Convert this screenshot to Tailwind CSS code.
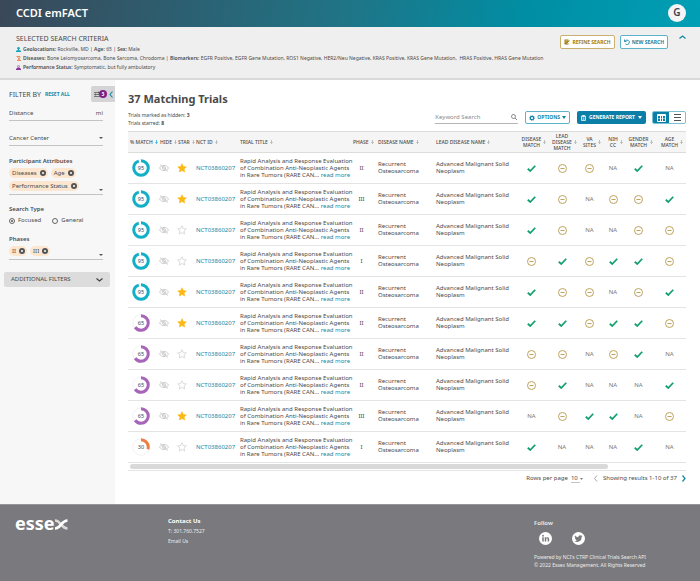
<!DOCTYPE html>
<html lang="en">
<head>
    <meta charset="UTF-8">
    <meta name="viewport" content="width=device-width, initial-scale=1.0">
    <title>CCDI emFACT</title>
    <script src="https://cdn.jsdelivr.net/npm/@tailwindcss/browser@4"></script>
</head>
<body class="min-h-screen flex flex-col bg-white font-['Noto_Sans',sans-serif] text-[6px] leading-[7px] text-[#4a4a4a]">

    <!-- Top bar -->
    <header class="h-[27px] shrink-0 flex items-center justify-between pl-4 pr-[14px] pb-[2px] bg-[linear-gradient(100deg,#3a4859,#1f7587_50%,#008ea4_75%,#009fb5)]">
        <h1 class="text-[11px] leading-none font-semibold text-white">CCDI emFACT</h1>
        <button class="size-[18px] rounded-full bg-[#f4f4f6] text-[10px] font-semibold text-[#3b3f52]">G</button>
    </header>

    <!-- Search criteria -->
    <section class="flex justify-between bg-[#efefef] border-b-2 border-[#d9d9d9] pl-4 pr-[14px] pt-2 pb-[6px]">
        <div>
            <h2 class="text-[7px] leading-[7px] mb-[3px]">SELECTED SEARCH CRITERIA</h2>
            <ul class="text-[5px] leading-[9px]">
                <li class="flex items-center gap-[2px]">
                    <svg class="size-[5px]" viewBox="0 0 10 10" fill="#14a5b8"><circle cx="5" cy="2.5" r="2.5"/><path d="M4 4h2v2l4 1.500V10H0V7.500L4 6z"/></svg>
                    <span><b class="font-semibold">Geolocations:</b> Rockville, MD | <b class="font-semibold">Age:</b> 65 | <b class="font-semibold">Sex:</b> Male</span>
                </li>
                <li class="flex items-center gap-[2px]">
                    <svg class="size-[5px]" viewBox="0 0 10 10" fill="none" stroke="#ee8352" stroke-width="1.800"><path d="M1 1h7M2 9h8M3 1c0 4 5 4 5 8M8 1c0 4-4 4-4 8M4 5h3"/></svg>
                    <span><b class="font-semibold">Diseases:</b> Bone Leiomyosarcoma, Bone Sarcoma, Chrodoma | <b class="font-semibold">Biomarkers:</b> EGFR Positive, EGFR Gene Mutation, ROS1 Negative, HER2/Neu Negative, KRAS Positive, KRAS Gene Mutation,&nbsp; HRAS Positive, HRAS Gene Mutation</span>
                </li>
                <li class="flex items-center gap-[2px]">
                    <svg class="size-[5px]" viewBox="0 0 10 10" fill="#8e35a0"><circle cx="5" cy="2.500" r="2" fill="none" stroke="#8e35a0"/><path d="M3 5h4l3 3v2H0V8z"/></svg>
                    <span><b class="font-semibold">Performance Status:</b> Symptomatic, but fully ambulatory</span>
                </li>
            </ul>
        </div>
        <div class="flex items-start gap-[5px] text-[5px] font-bold">
            <button class="h-[14px] flex items-center gap-[2px] px-[3px] rounded-[2px] border border-[#c9b06e] bg-white text-[#a07d14]">
                <svg class="size-[6px]" viewBox="0 0 12 12"><path d="M1 1h8v3l-3 3v2h2l1-1v3H1z" fill="#a07d14"/><path d="M3 3.500h4M3 6h2" stroke="#fff"/><path d="M6 8l5-5" stroke="#a07d14" stroke-width="2"/></svg>
                REFINE SEARCH
            </button>
            <button class="h-[14px] flex items-center gap-[2px] px-[3px] rounded-[2px] border border-[#5db3c9] bg-white text-[#1687a7]">
                <svg class="size-[6px]" viewBox="0 0 12 12" fill="none" stroke="#1687a7" stroke-width="1.800"><path d="M1 1v4h4M2 5a4.500 4.500 0 1 1 1 4.800"/></svg>
                NEW SEARCH
            </button>
            <button class="ml-[6px]" aria-label="Collapse">
                <svg class="w-[7px] h-[4px]" viewBox="0 0 14 8" fill="none" stroke="#1687a7" stroke-width="2.500"><path d="M1 7l6-5 6 5"/></svg>
            </button>
        </div>
    </section>

    <div class="flex grow">
        <!-- Filters -->
        <aside class="w-[115px] shrink-0 bg-[#f7f7f7] pt-[6px]">
            <div class="flex items-center h-[16px] pl-[9px]">
                <h2 class="text-[7px]">FILTER BY</h2>
                <button class="ml-[4px] text-[5px] font-bold text-[#1687a7]">RESET ALL</button>
                <button class="ml-auto w-[24px] h-[16px] rounded-l-[2px] bg-[#d4d4d6] flex items-center pl-[3px]" aria-label="Hide filters">
                    <svg class="w-[6px] h-[7px]" viewBox="0 0 12 14" stroke="#555" stroke-width="1.500"><path d="M0 3h12M0 7h12M0 11h12M9 1v4M3 5v4"/></svg>
                    <span class="-ml-px size-[8px] rounded-full bg-[#7b1f86] text-white text-[5px] leading-[8px] font-bold">3</span>
                    <svg class="ml-[2px] w-[4px] h-[7px]" viewBox="0 0 8 14" fill="none" stroke="#1687a7" stroke-width="2.200"><path d="M7 1L2 7l5 6"/></svg>
                </button>
            </div>
            <form class="pl-[9px] pr-[12px]">
                <label class="mt-[5px] h-[14px] flex items-start pt-[3px] justify-between border-b border-[#c4c4c4]">
                    <input class="w-16 placeholder:text-[#4a4a4a] placeholder:opacity-100 outline-none" placeholder="Distance" aria-label="Distance">
                    <span>mi</span>
                </label>
                <div class="mt-[10px] h-[15px] flex items-center border-b border-[#c4c4c4]">
                    <select class="grow appearance-none outline-none" aria-label="Cancer Center"><option>Cancer Center</option></select>
                    <svg class="w-[4px] h-[2px]" viewBox="0 0 8 4" fill="#555"><path d="M0 0h8L4 4z"/></svg>
                </div>

                <h3 class="mt-[12px] font-semibold">Participant Attributes</h3>
                <div class="mt-[3px] flex items-end justify-between border-b border-[#c4c4c4] pb-[3px]">
                    <div class="flex flex-wrap gap-x-[3px] gap-y-[3px]" data-chips="Diseases,Age,Performance Status"></div>
                    <svg class="w-[4px] h-[2px] shrink-0" viewBox="0 0 8 4" fill="#555"><path d="M0 0h8L4 4z"/></svg>
                </div>

                <fieldset class="mt-[11px]">
                    <legend class="font-semibold">Search Type</legend>
                    <div class="mt-[4px] flex gap-[11px]">
                        <label class="flex items-center gap-[3px]"><input type="radio" name="type" checked class="appearance-none size-[6px] rounded-full border border-[#666] p-px checked:bg-[#555] bg-clip-content">Focused</label>
                        <label class="flex items-center gap-[3px]"><input type="radio" name="type" class="appearance-none size-[6px] rounded-full border border-[#666]">General</label>
                    </div>
                </fieldset>

                <h3 class="mt-[12px] font-semibold">Phases</h3>
                <div class="mt-[3px] flex items-end justify-between border-b border-[#c4c4c4] pb-[3px]">
                    <div class="flex gap-x-[3px]" data-chips="II,III"></div>
                    <svg class="w-[4px] h-[2px] shrink-0" viewBox="0 0 8 4" fill="#555"><path d="M0 0h8L4 4z"/></svg>
                </div>
            </form>
            <button class="mt-[12px] ml-[4px] w-[106px] h-[15px] flex items-center justify-between px-[7px] rounded-[2px] bg-[#dcdcdc]">
                ADDITIONAL FILTERS
                <svg class="w-[7px] h-[4px]" viewBox="0 0 14 8" fill="none" stroke="#444" stroke-width="2.500"><path d="M1 1l6 5 6-5"/></svg>
            </button>
        </aside>

        <!-- Results -->
        <main class="grow min-w-0 pl-[13px] pr-[14px] pt-[12px]">
            <h2 class="text-[11px] leading-[14px] font-bold">37 Matching Trials</h2>
            <div class="flex items-start justify-between mt-[5px] h-[20px]">
                <div class="text-[5px] leading-[8px]">
                    <p>Trials marked as hidden: <b>3</b></p>
                    <p>Trials starred: <b>8</b></p>
                </div>
                <div class="flex items-center text-[5px] font-bold">
                    <label class="w-[83px] h-[12px] flex items-center justify-between border-b border-[#b5b5b5] mr-[7px] pr-px">
                        <input class="w-16 text-[6px] font-normal outline-none placeholder:text-[#8a8a8a]" placeholder="Keyword Search" aria-label="Keyword Search">
                        <svg class="size-[6px]" viewBox="0 0 12 12" fill="none" stroke="#666" stroke-width="1.500"><circle cx="5" cy="5" r="4"/><path d="M8 8l4 4"/></svg>
                    </label>
                    <button class="h-[13px] flex items-center gap-[2px] px-[3px] rounded-[2px] border border-[#5db3c9] text-[#1687a7]">
                        <svg class="size-[6px]" viewBox="0 0 12 12" fill="none" stroke="#0d7fa5"><circle cx="6" cy="6" r="3.500" stroke-width="2.500"/><circle cx="6" cy="6" r="5.300" stroke-dasharray="2 2.160"/></svg>
                        OPTIONS
                        <svg class="w-[4px] h-[3px]" viewBox="0 0 8 6" fill="#0d7fa5"><path d="M0 0h8L4 6z"/></svg>
                    </button>
                    <button class="ml-[7px] h-[13px] flex items-center gap-[3px] px-[4px] rounded-[2px] bg-[#0b7fa8] text-white">
                        <svg class="w-[5px] h-[6px]" viewBox="0 0 10 12" fill="none" stroke="#fff" stroke-width="1.500"><path d="M1 2h8v9H1z"/><path d="M3 1h4v2H3zM3 6h4M3 8.500h4"/></svg>
                        GENERATE REPORT
                        <svg class="w-[4px] h-[3px]" viewBox="0 0 8 6" fill="#fff"><path d="M0 0h8L4 6z"/></svg>
                    </button>
                    <div class="ml-[6px] h-[13px] w-[34px] flex rounded-[2px] border border-[#7cc0d2] overflow-hidden">
                        <button class="w-1/2 bg-[#0b7fa8] flex items-center justify-center" aria-label="Table view">
                            <svg class="w-[9px] h-[8px]" viewBox="0 0 9 8" fill="none" stroke="#fff"><path d="M.5.5h8v7h-8zM0 1.500h9M3.500 2v6M5.500 2v6"/><path d="M0 4.500h9" stroke-opacity=".5"/></svg>
                        </button>
                        <button class="w-1/2 flex items-center justify-center" aria-label="List view">
                            <svg class="w-[7px] h-[7px]" viewBox="0 0 7 7" stroke="#555"><path d="M0 .5h7M0 3.500h7M0 6.500h7"/></svg>
                        </button>
                    </div>
                </div>
            </div>

            <table class="w-full table-fixed">
                <colgroup>
                    <col class="w-[30px]"><col class="w-[18px]"><col class="w-[20px]"><col class="w-[44px]"><col>
                    <col class="w-[25px]"><col class="w-[58px]"><col class="w-[80px]">
                    <col class="w-[31px]"><col class="w-[30px]"><col class="w-[25px]"><col class="w-[22px]"><col class="w-[29px]"><col class="w-[33px]">
                </colgroup>
                <thead class="bg-[#f5f5f5] border-y border-[#dcdcdc] text-[5px] leading-[6px]">
                    <tr id="head"></tr>
                </thead>
                <tbody id="trials"></tbody>
            </table>
            <div class="border-b border-[#e4e4e4] py-px pl-[2px]">
                <div class="w-[86%] h-[5px] rounded-full bg-[#d9d9d9]"></div>
            </div>

            <div class="flex items-center justify-end mt-[3px] mb-[21px] h-[9px]">
                <label for="perPage">Rows per page</label>
                <select id="perPage" class="appearance-none ml-[3px] w-[9px] border-b border-[#c4c4c4]"><option>10</option></select>
                <svg class="w-[3px] h-[2px]" viewBox="0 0 8 4" fill="#555"><path d="M0 0h8L4 4z"/></svg>
                <button class="ml-[11px]" aria-label="Previous page"><svg class="w-[4px] h-[7px]" viewBox="0 0 8 14" fill="none" stroke="#999" stroke-width="1.800"><path d="M6 1L1 7l5 6"/></svg></button>
                <span class="ml-[5px]">Showing results 1-10 of 37</span>
                <button class="ml-[5px]" aria-label="Next page"><svg class="w-[4px] h-[7px]" viewBox="0 0 8 14" fill="none" stroke="#1687a7" stroke-width="2.500"><path d="M1 1l5 6-5 6"/></svg></button>
            </div>
        </main>
    </div>

    <!-- Footer -->
    <footer class="h-[78px] shrink-0 flex bg-[#7a797d] border-t border-[#96959a] text-[#ececec] text-[5px] pl-[15px] pr-[48px]">
        <div class="w-[153px] pt-[10px] flex items-start text-[18px] leading-[16px] font-bold text-white">
            <span>esse</span>
            <svg class="mt-[4px] w-[13px] h-[11px]" viewBox="0 0 13 11" fill="none"><path d="M0 1.500c6 0 6 8 12.500 8" stroke="#d8d8d8" stroke-width="2.500"/><path d="M0 9.500c6 0 6-8 12.500-8" stroke="#fff" stroke-width="2.500"/></svg>
        </div>
        <div class="pt-[13px]">
            <h3 class="text-[6px] font-bold text-white">Contact Us</h3>
            <p class="mt-[3px]">T: 301.760.7527</p>
            <a href="#" class="block mt-[3px]">Email Us</a>
        </div>
        <div class="ml-auto w-[118px] pt-[15px]">
            <h3 class="text-[6px] font-semibold">Follow</h3>
            <div class="flex gap-[20px] pl-[5px] mt-[5px]">
                <a href="#" aria-label="LinkedIn"><svg class="size-[13px]" viewBox="0 0 26 26"><circle cx="13" cy="13" r="13" fill="#fff"/><g fill="#7a797d"><circle cx="8" cy="7.500" r="1.800"/><path d="M6.500 10.500h3V19h-3zM11.500 10.500h2.800v1.200c2-2.500 6-1.500 6 2.300v5h-3v-4.500c0-2.500-2.800-2.300-2.800 0V19h-3z"/></g></svg></a>
                <a href="#" aria-label="Twitter"><svg class="size-[13px]" viewBox="0 0 26 26"><circle cx="13" cy="13" r="13" fill="#fff"/><path transform="translate(4.500 4.500) scale(.72)" fill="#7a797d" d="M23 5a9 9 0 0 1-2.700.7 4.600 4.600 0 0 0 2-2.600 9 9 0 0 1-2.900 1.100 4.600 4.600 0 0 0-7.900 4.200A13 13 0 0 1 2 3.600a4.600 4.600 0 0 0 1.400 6.200 4.500 4.500 0 0 1-2-.6 4.600 4.600 0 0 0 3.600 4.600 4.600 4.600 0 0 1-2 .1 4.600 4.600 0 0 0 4.300 3.200A9.300 9.300 0 0 1 .5 19a13 13 0 0 0 20.200-11.600A9 9 0 0 0 23 5z"/></svg></a>
            </div>
            <p class="mt-[8px] leading-[8px]">Powered by NCI's CTRP Clinical Trials Search API<br>© 2022 Essex Management. All Rights Reserved</p>
        </div>
    </footer>

    <script>
        const arrow = (color) => `<svg class="w-[3px] h-[4px] shrink-0" viewBox="0 0 6 8" fill="none" stroke="${color}" stroke-width="1.500"><path d="M3 0v7M.5 4.500L3 7l2.500-2.500"/></svg>`;

        const columns = ['% MATCH', 'HIDE', 'STAR', 'NCT ID', 'TRIAL TITLE', 'PHASE', 'DISEASE NAME', 'LEAD DISEASE NAME',
            'DISEASE<br>MATCH', 'LEAD<br>DISEASE<br>MATCH', 'VA<br>SITES', 'NIH<br>CC', 'GENDER<br>MATCH', 'AGE<br>MATCH'];

        // score, starred, phase, match columns (y = match, o = unknown, n = not applicable)
        const trials = [
            [95, 1, 'II', 'yoonyn'],
            [95, 1, 'III', 'yonooy'],
            [95, 0, 'II', 'yonnoo'],
            [95, 0, 'I', 'oyoyyo'],
            [95, 1, 'II', 'yoonoy'],
            [65, 1, 'II', 'yyoyyo'],
            [65, 0, 'II', 'oonoyn'],
            [65, 0, 'II', 'oynnny'],
            [65, 1, 'III', 'noyyno'],
            [30, 0, 'I', 'ynnnyn'],
        ];

        const marks = {
            y: '<svg class="w-[9px] h-[7px] mx-auto" viewBox="0 0 18 14" fill="none" stroke="#12a06c" stroke-width="3.500"><path d="M1.500 7.500l5 4.500L16.500 1.500"/></svg>',
            o: '<svg class="size-[9px] mx-auto" viewBox="0 0 18 18" fill="none" stroke="#b8974a" stroke-width="1.800"><circle cx="9" cy="9" r="8"/><path d="M5 9h8"/></svg>',
            n: '<span class="text-[#777]">NA</span>',
        };

        const star = (on) => `<svg class="size-[10px]" viewBox="0 0 20 20" fill="${on ? '#fdb913' : 'none'}" stroke="${on ? '#fdb913' : '#c4c4c4'}" stroke-width="1.200"><path d="M10 1.500l2.600 5.600 6 .7-4.500 4.100 1.200 6.100L10 15l-5.300 3 1.200-6.100L1.400 7.800l6-.7z"/></svg>`;

        const ring = (score) => {
            const color = score > 90 ? '#12b0c7' : score > 50 ? '#a864b8' : '#f07c45';
            return `<svg class="size-[18px]" viewBox="0 0 36 36">
                <circle cx="18" cy="18" r="16.500" fill="none" stroke="#e3e3e3"/>
                <circle cx="18" cy="18" r="14.500" fill="none" stroke="${color}" stroke-width="6" pathLength="100" stroke-dasharray="${score} 100" transform="rotate(-90 18 18)"/>
                <text x="18" y="22" text-anchor="middle" font-size="11" fill="#444">${score}</text>
            </svg>`;
        };

        document.getElementById('head').innerHTML = columns.map((name, i) => {
            const place = i < 3 ? 'pl-[2px]' : i < 8 ? '' : 'justify-center pl-[5px]';
            return `<th class="h-[21px] p-0 font-medium"><button class="w-full flex items-center gap-[2px] whitespace-nowrap ${place}"><span>${name}</span>${arrow(i ? '#aaa' : '#12b0c7')}</button></th>`;
        }).join('');

        document.getElementById('trials').innerHTML = trials.map(([score, starred, phase, match]) => `
            <tr class="h-[31px] border-b border-[#e4e4e4]">
                <td class="pl-[4px]">${ring(score)}</td>
                <td class="pl-[1px]"><button class="block" aria-label="Hide"><svg class="w-[10px] h-[8px]" viewBox="0 0 20 16" fill="none" stroke="#c0c0c0" stroke-width="1.500"><path d="M1 8c4-7 14-7 18 0-4 7-14 7-18 0zM2 1l16 14"/><circle cx="10" cy="8" r="3"/></svg></button></td>
                <td class="pl-[1px]"><button class="block" aria-label="Star">${star(starred)}</button></td>
                <td><a href="#" class="text-[#1687a7]">NCT03860207</a></td>
                <td class="whitespace-nowrap">Rapid Analysis and Response Evaluation<br>of Combination Anti-Neoplastic Agents<br>in Rare Tumors (RARE CAN... <a href="#" class="text-[#1687a7]">read more</a></td>
                <td class="text-center pr-[8px]">${phase}</td>
                <td>Recurrent<br>Osteosarcoma</td>
                <td>Advanced Malignant Solid<br>Neoplasm</td>
                ${[...match].map((m) => `<td class="text-center">${marks[m]}</td>`).join('')}
            </tr>`).join('');

        document.querySelectorAll('[data-chips]').forEach((box) => {
            box.innerHTML = box.dataset.chips.split(',').map((name) => `
                <span class="h-[10px] flex items-center gap-[3px] pl-[3px] pr-[2px] rounded-full bg-[#fde6cf]">${name}
                    <button type="button" aria-label="Remove ${name}"><svg class="size-[6px]" viewBox="0 0 12 12"><circle cx="6" cy="6" r="6" fill="#555"/><path d="M4 4l4 4M8 4l-4 4" stroke="#fff" stroke-width="1.500"/></svg></button>
                </span>`).join('');
        });
    </script>
</body>
</html>
